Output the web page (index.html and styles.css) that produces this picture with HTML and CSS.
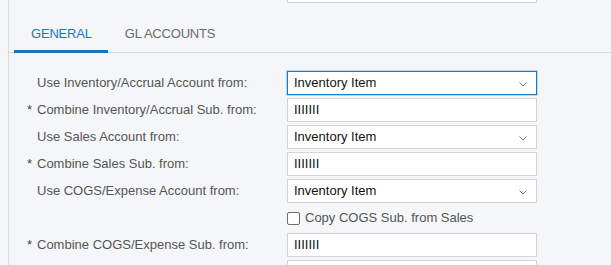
FILE: index.html
```html
<!DOCTYPE html>
<html lang="en">
<head>
    <meta charset="UTF-8">
    <title>Posting Classes</title>
    <link rel="stylesheet" href="styles.css">
</head>
<body>
    <div class="panel">
        <div class="top-field">
            <div class="field"></div>
        </div>

        <div class="tabs">
            <div class="tab active">GENERAL</div>
            <div class="tab">GL ACCOUNTS</div>
        </div>

        <div class="form">
            <div class="row">
                <div class="label"><span class="star"></span>Use Inventory/Accrual Account from:</div>
                <div class="field select focused">Inventory Item
                    <svg class="chev" width="8" height="5" viewBox="0 0 8 5"><polyline points="0.5,0.5 4,4 7.5,0.5" /></svg>
                </div>
            </div>
            <div class="row">
                <div class="label"><span class="star">*</span>Combine Inventory/Accrual Sub. from:</div>
                <div class="field">IIIIIII</div>
            </div>
            <div class="row">
                <div class="label"><span class="star"></span>Use Sales Account from:</div>
                <div class="field select">Inventory Item
                    <svg class="chev" width="8" height="5" viewBox="0 0 8 5"><polyline points="0.5,0.5 4,4 7.5,0.5" /></svg>
                </div>
            </div>
            <div class="row">
                <div class="label"><span class="star">*</span>Combine Sales Sub. from:</div>
                <div class="field">IIIIIII</div>
            </div>
            <div class="row">
                <div class="label"><span class="star"></span>Use COGS/Expense Account from:</div>
                <div class="field select">Inventory Item
                    <svg class="chev" width="8" height="5" viewBox="0 0 8 5"><polyline points="0.5,0.5 4,4 7.5,0.5" /></svg>
                </div>
            </div>
            <div class="row">
                <div class="label"></div>
                <label class="check"><span class="box"></span>Copy COGS Sub. from Sales</label>
            </div>
            <div class="row">
                <div class="label"><span class="star">*</span>Combine COGS/Expense Sub. from:</div>
                <div class="field">IIIIIII</div>
            </div>
            <div class="row">
                <div class="label"></div>
                <div class="field"></div>
            </div>
        </div>
    </div>
</body>
</html>
```

FILE: styles.css
```css
*{
    padding:0;
    margin:0;
    box-sizing:border-box;
}
html,body{
    background:#f4f6f8;
    font-family:"Liberation Sans", Arial, sans-serif;
    font-size:13px;
    overflow:hidden;
}
.panel{
    margin-left:8px;
    border-left:1px solid #d9dbdd;
    min-height:100vh;
}
.top-field{
    margin-top:-21px;
    padding-left:278px;
}
.top-field .field{
    width:250px;
}

/* tabs */
.tabs{
    display:flex;
    margin-top:12px;
    padding-left:5px;
    border-bottom:1px solid #d6d8db;
}
.tab{
    padding:11px 16px 8px 17px;
    line-height:16px;
    font-size:13px;
    letter-spacing:-0.2px;
    color:#6b6b6b;
    border-bottom:3px solid transparent;
    margin-bottom:-1px;
}
.tab.active{
    color:#1b78c0;
    border-bottom-color:#1773bb;
}

/* form */
.form{
    padding-top:18px;
}
.row{
    display:grid;
    grid-template-columns:278px 250px;
    height:24px;
    margin-bottom:3px;
}
.label{
    padding-left:18px;
    line-height:24px;
    color:#555;
    white-space:nowrap;
}
.star{
    display:inline-block;
    width:10px;
    color:#444;
}
.field{
    position:relative;
    height:24px;
    border:1px solid #d2d4d7;
    background:#fff;
    padding:0 6px;
    line-height:22px;
    color:#111;
}
.field.focused{
    border-color:#1f7cc4;
    box-shadow:0 0 0 1px #b7d6ee;
}
.chev{
    position:absolute;
    right:9px;
    top:10px;
}
.chev polyline{
    fill:none;
    stroke:#7a7a7a;
    stroke-width:1;
}
.check{
    display:flex;
    align-items:center;
    color:#555;
    line-height:24px;
}
.check .box{
    width:13px;
    height:13px;
    border:1px solid #6d6d6d;
    border-radius:2px;
    background:#fff;
    margin-right:5px;
}
```
